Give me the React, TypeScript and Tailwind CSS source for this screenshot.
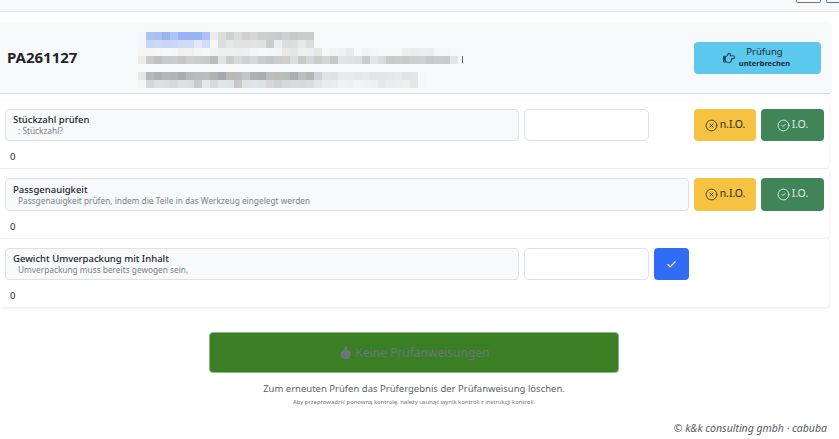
import { CircleX, CircleCheck, Check } from 'lucide-react';
import { FaRegHandPointRight } from 'react-icons/fa';
import { BsHandThumbsUpFill } from 'react-icons/bs';

// --- verpixelter Bereich (Adresse), Zellen je 8px ---
const MOSAIC: { y: number; h: number; cells: string[] }[] = [
  { y: 4, h: 8, cells: ['f5f6f9', 'b0c3f5', 'acc0f4', '98b4f5', 'b0c3f5', '98b3f6', '98b3f6', '98b3f6', 'adc1f5', 'e9ecea', 'dcdddd', 'cdcfd0', 'dcdcda', 'cfd0cf', 'd5d6d6', 'cdcece', 'cccdcd', 'c8cacb', 'cfd0d0', 'c8c8c8', 'cccccc', 'cccccc'] },
  { y: 12, h: 8, cells: ['f5f6f9', 'cad6f7', 'ccd8f8', 'c9d6f8', 'cad7f8', 'd0dbf8', 'd0dbf8', 'e4e9fa', 'd2dcf8', 'f5f6f8', 'dcdddd', 'e6e7e7', 'e1e2e1', 'e2e2e0', 'e2e3e2', 'e2e2e2', 'cbcdcd', 'ecedee', 'dcddde', 'dddede', 'e8e9e9', 'dcdde0'] },
  { y: 20, h: 8, cells: ['f5f5f5', 'f5f5f5', 'f6f6f6', 'f7f8f8', 'f6f7f7', 'f0f0ef', 'f0f0f0', 'f5f6f6', 'f7f8f8', 'f0f1f1', 'eeefef', 'eeefef', 'eeeeee', 'eeefef', 'f4f5f6', 'f7f8f9', 'f5f6f7', 'f4f5f6', 'e8e8e7', 'e6e6e5', 'eeefee', 'eeeeee', 'e6e7e7', 'f7f8f9', 'f2f3f3', 'f0f1f0', 'e9eaea', 'f8f9fa', 'f2f3f3', 'f5f6f7', 'f7f8f8', 'f7f8f8', 'f7f8f8', 'eeeeed', 'ebecec', 'eeeeee', 'ecedec', 'f5f6f7', 'f5f6f7', 'f7f8f9'] },
  { y: 28, h: 8, cells: ['ecebe8', 'c7c9ca', 'bfc0bf', 'c8c9ca', 'cbcccd', 'c4c6c7', 'cfcfcb', 'cccdcc', 'cacbc8', 'bbbdbd', 'e1e2e3', 'cccdc9', 'd8d9dc', 'ced0d1', 'd6d7d6', 'c7cdcd', 'c3c6c9', 'cbcccb', 'cfcecb', 'dadde6', 'c9c9c5', 'd4d8da', 'cccbc8', 'd5d6d4', 'c6c8c8', 'e1e3e5', 'dfe1e2', 'dedfdf', 'c9cbcc', 'e4e5e5', 'd7dbdd', 'c9cacb', 'cbcccc', 'c9cacb', 'cecfcf', 'cfd0d1', 'c6c8ca', 'cccccb', 'c9cbcc', 'e2e5e9'] },
  { y: 44, h: 8, cells: ['e9e7e3', 'b4b9bc', 'adafb0', 'b3b6b8', 'b2b3b4', 'a9abad', 'b9b8b7', 'b9bcbd', 'babdbf', 'b3b2ac', 'a2a7b1', 'bbb9b6', 'bcbab6', 'c3c5c7', 'aeafae', 'a9aeb0', 'c0bebb', 'bcbcb9', 'b9bcbd', 'acafb0', 'bebfbd', 'b7b5b0', 'cdd1da', 'e1e3e2', 'dfe0e1', 'e9eaeb', 'e9eaeb', 'e6e7e8', 'e9e9e9', 'e3e4e5', 'e3e4e6', 'e6e7e8', 'e8e9ea', 'e2e3e4', 'e4e5e6', 'f6f7f8'] },
  { y: 52, h: 8, cells: ['f5f5f1', 'd6d7d8', 'dfe0df', 'dddedd', 'd8d9d9', 'dfe0df', 'dddedd', 'c9cacb', 'e3e7eb', 'd8d8d7', 'e2e4e7', 'e2e3e5', 'c9c8c5', 'dee1e6', 'e1e4e9', 'e0e2e6', 'd8d7d5', 'ced2d6', 'd6d7d9', 'd9dadc', 'd8d9d9', 'dcdcdc', 'e3e5ea', 'eaebec', 'ececea', 'f1f2f3', 'eff0f1', 'f3f4f5', 'f0f1f2', 'eff0f1', 'e7e8e8', 'ecedee', 'eeeeed', 'eff0ef', 'e5e6e6', 'f6f7f8'] },
];

function AddressMosaic() {
  return (
    <svg width="330" height="64" viewBox="0 0 330 64" className="mt-[5px] shrink-0" shapeRendering="crispEdges">
      {MOSAIC.map(row =>
        row.cells.map((c, i) => (
          <rect key={`${row.y}-${i}`} x={i * 8} y={row.y} width="8" height={row.h} fill={`#${c}`} />
        ))
      )}
      <rect x="324" y="28" width="1" height="7" fill="#5a60a8" />
    </svg>
  );
}

function FailButton() {
  return (
    <button className="flex h-full w-[62px] items-center justify-center gap-[2px] rounded-[4px] bg-[#f5c242] text-[10.5px] text-[#2a2a22]">
      <CircleX size={13} strokeWidth={1.5} />
      <span className="-mt-[1px]">n.I.O.</span>
    </button>
  );
}

function PassButton() {
  return (
    <button className="flex h-full w-[63px] items-center justify-center gap-[2px] rounded-[4px] bg-[#3f8558] text-[10.5px] text-[#e2ece6]">
      <CircleCheck size={13} strokeWidth={1.75} />
      <span className="-mt-[1px]">I.O.</span>
    </button>
  );
}

function LabelBox({ title, text, className }: { title: string; text: string; className: string }) {
  return (
    <div className={`flex h-full flex-col justify-center rounded-[4px] border border-[#dee2e6] bg-[#f8f9fa] pl-[7px] ${className}`}>
      <div className="text-[9.5px] leading-[12px] font-medium text-[#212529]">{title}</div>
      <div className="pl-[5px] text-[8.3px] leading-[10px] text-[#7b8288]">{text}</div>
    </div>
  );
}

function ValueInput() {
  return <div className="ml-[5px] h-full w-[125px] rounded-[5px] border border-[#dee2e6] bg-white" />;
}

function CheckCard({ children, className, rowClass }: { children: React.ReactNode; className: string; rowClass: string }) {
  return (
    <div className={`mr-[10px] flex flex-col rounded-r-[4px] bg-white pt-[9px] pl-[5px] shadow-[0_1px_3px_rgba(0,0,0,0.1)] ${className}`}>
      <div className={`flex items-stretch ${rowClass}`}>{children}</div>
      <div className="mt-[10px] pl-[5px] text-[9.5px] leading-[12px] text-[#212529]">0</div>
    </div>
  );
}

export default function App() {
  return (
    <div className="h-[439px] w-[839px] overflow-hidden bg-white font-['Noto_Sans',sans-serif]">
      {/* Topbar */}
      <div className="flex h-[12px] justify-end gap-[5px] border-b border-[#dee2e6] bg-[#f8f9fa]">
        <div className="h-[3px] w-[25px] rounded-b-[2px] border border-t-0 border-[#6c757d]" />
        <div className="h-[3px] w-[13px] rounded-bl-[2px] border border-t-0 border-r-0 border-[#3b6ff5]" />
      </div>

      {/* Kopf */}
      <div className="mt-[10px] mr-[7px] flex h-[72px] items-center rounded-r-[4px] border-b border-[#d5d8dc] bg-[#f8f9fa] pl-[7px]">
        <div className="w-[131px] shrink-0 text-[15px] font-bold text-[#212529]">PA261127</div>
        <AddressMosaic />
        <button className="mr-[11px] ml-auto flex h-[32px] w-[127px] items-center justify-center gap-[4px] rounded-[4px] bg-[#5dc8ee] pr-[2px] text-[#1d2b33]">
          <FaRegHandPointRight size={12} className="opacity-80" />
          <span className="-mt-[2px] flex flex-col items-center">
            <span className="text-[9.5px] leading-[12px]">Prüfung</span>
            <span className="text-[7.5px] leading-[10px] font-bold">unterbrechen</span>
          </span>
        </button>
      </div>

      {/* Prüfanweisungen */}
      <div className="mt-[6px] flex flex-col gap-[1px]">
        <CheckCard className="h-[68px]" rowClass="h-[32px]">
          <LabelBox className="w-[514px]" title="Stückzahl prüfen" text=": Stückzahl?" />
          <ValueInput />
          <div className="ml-[45px] flex gap-[5px]">
            <FailButton />
            <PassButton />
          </div>
        </CheckCard>
        <CheckCard className="h-[69px]" rowClass="h-[33px]">
          <LabelBox className="w-[684px]" title="Passgenauigkeit" text="Passgenauigkeit prüfen, indem die Teile in das Werkzeug eingelegt werden" />
          <div className="ml-[5px] flex gap-[5px]">
            <FailButton />
            <PassButton />
          </div>
        </CheckCard>
        <CheckCard className="h-[68px]" rowClass="h-[32px]">
          <LabelBox className="w-[514px]" title="Gewicht Umverpackung mit Inhalt" text="Umverpackung muss bereits gewogen sein," />
          <ValueInput />
          <button className="ml-[5px] flex w-[35px] items-center justify-center rounded-[4px] bg-[#316cf4] text-white">
            <Check size={11} strokeWidth={2.5} />
          </button>
        </CheckCard>
      </div>

      {/* Abschluss */}
      <div className="mt-[25px] mr-[11px] flex flex-col items-center">
        <button className="flex h-[41px] w-[410px] items-center justify-center gap-[4px] rounded-[4px] border border-[#8fb58a] bg-[#3a7f24] text-[12px] text-[#6c757d]">
          <BsHandThumbsUpFill size={13} />
          Keine Prüfanweisungen
        </button>
        <div className="mt-[9px] text-[9.5px] leading-[14px] text-[#5c6166]">Zum erneuten Prüfen das Prüfergebnis der Prüfanweisung löschen.</div>
        <div className="mt-[1px] text-[5.9px] leading-[10px] text-[#6c757d]">Aby przeprowadzić ponowną kontrolę, należy usunąć wynik kontroli z instrukcji kontroli.</div>
      </div>
      <div className="mt-[14px] pr-[12px] text-right text-[10.5px] leading-[14px] text-[#555b60] italic">© k&amp;k consulting gmbh · cabuba</div>
    </div>
  );
}
